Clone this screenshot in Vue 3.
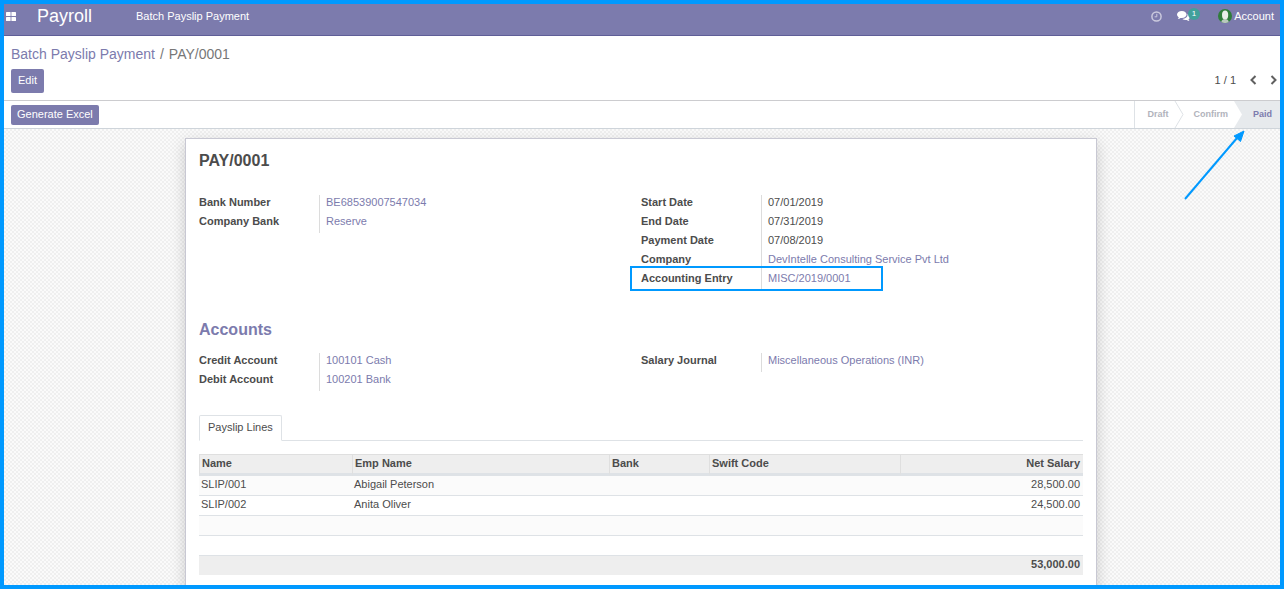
<script setup>
const infoLeft = [
  { label: 'Bank Number', value: 'BE68539007547034', link: true },
  { label: 'Company Bank', value: 'Reserve', link: true },
]
const infoRight = [
  { label: 'Start Date', value: '07/01/2019' },
  { label: 'End Date', value: '07/31/2019' },
  { label: 'Payment Date', value: '07/08/2019' },
  { label: 'Company', value: 'DevIntelle Consulting Service Pvt Ltd', link: true },
  { label: 'Accounting Entry', value: 'MISC/2019/0001', link: true, marked: true },
]
const accountsLeft = [
  { label: 'Credit Account', value: '100101 Cash', link: true },
  { label: 'Debit Account', value: '100201 Bank', link: true },
]
const accountsRight = [
  { label: 'Salary Journal', value: 'Miscellaneous Operations (INR)', link: true },
]
const sections = [
  { id: 'info', title: '', groups: [infoLeft, infoRight] },
  { id: 'accounts', title: 'Accounts', groups: [accountsLeft, accountsRight] },
]
const lines = [
  { name: 'SLIP/001', emp: 'Abigail Peterson', net: '28,500.00' },
  { name: 'SLIP/002', emp: 'Anita Oliver', net: '24,500.00' },
  { name: '', emp: '', net: '' },
  { name: '', emp: '', net: '' },
]
</script>

<template>
  <div class="app">
    <header class="navbar">
      <button class="icon-btn apps" type="button" aria-label="Applications">
        <svg width="10" height="9" viewBox="0 0 10 9" fill="currentColor">
          <rect x="0" y="0" width="4.6" height="4" rx=".6" />
          <rect x="5.4" y="0" width="4.6" height="4" rx=".6" />
          <rect x="0" y="5" width="4.6" height="4" rx=".6" />
          <rect x="5.4" y="5" width="4.6" height="4" rx=".6" />
        </svg>
      </button>
      <a class="brand" href="#">Payroll</a>
      <a class="menu" href="#">Batch Payslip Payment</a>
      <div class="systray">
        <button class="icon-btn clock" type="button" aria-label="Activities">
          <svg width="11" height="11" viewBox="0 0 11 11" fill="none" stroke="currentColor">
            <circle cx="5.5" cy="5.5" r="4.6" stroke-width="1.5" />
            <path d="M5.8 2.8v3H3.6" stroke-width="1" />
          </svg>
        </button>
        <button class="icon-btn chat" type="button" aria-label="Conversations">
          <svg width="13" height="11" viewBox="0 0 13 11" fill="currentColor">
            <path d="M4.8 0C2.1 0 0 1.6 0 3.6c0 1.1.7 2.1 1.8 2.8-.2.6-.6 1-1 1.5 1.1-.1 2-.5 2.7-1 .4.1.9.1 1.3.1 2.7 0 4.8-1.5 4.8-3.4S7.500 0 4.800 0z" />
            <path d="M10.600 3c.3 2.800-2.100 4.900-5.300 5 .9.700 2.100 1 3.400 1 .4 0 .8 0 1.100-.1.700.5 1.600.9 2.700 1-.4-.4-.8-.9-1-1.500 1-.6 1.500-1.400 1.500-2.300 0-1.300-.9-2.500-2.400-3.100z" />
          </svg>
          <span class="badge">1</span>
        </button>
        <button class="user" type="button">
          <svg width="14" height="14" viewBox="0 0 14 14">
            <circle cx="7" cy="7" r="7" fill="#2f7d3b" />
            <path d="M3.400 12.900c.2-1.700 1.400-2.300 2.500-2.700h2.400c1.100.4 2.200 1 2.400 2.700A7 7 0 0 1 3.400 12.900z" fill="#b9c9bd" />
            <ellipse cx="7.100" cy="5.900" rx="3.100" ry="4.500" fill="#e9eeea" />
          </svg>
          <span>Account</span>
        </button>
      </div>
    </header>

    <div class="control-panel">
      <nav class="breadcrumb" aria-label="Breadcrumb">
        <a href="#">Batch Payslip Payment</a>
        <span class="sep">/</span>
        <span>PAY/0001</span>
      </nav>
      <div class="actions">
        <button class="btn edit" type="button">Edit</button>
        <div class="pager">
          <span>1 / 1</span>
          <button type="button" aria-label="Previous">
            <svg width="8" height="10" viewBox="0 0 8 10" fill="none" stroke="currentColor" stroke-width="2"><path d="M6.500 1 2.500 5l4 4" /></svg>
          </button>
          <button type="button" aria-label="Next">
            <svg width="8" height="10" viewBox="0 0 8 10" fill="none" stroke="currentColor" stroke-width="2"><path d="m1.500 1 4 4-4 4" /></svg>
          </button>
        </div>
      </div>
    </div>

    <div class="statusbar">
      <button class="btn generate" type="button">Generate Excel</button>
      <div class="stages">
        <button class="stage" type="button">Draft</button>
        <svg class="chevron" width="10" height="27" viewBox="0 0 10 27">
          <path d="M1 0 9 13.500 1 27" fill="none" stroke="#dee2e6" />
        </svg>
        <button class="stage confirm" type="button">Confirm</button>
        <svg class="chevron active" width="10" height="27" viewBox="0 0 10 27">
          <path d="M0 0h1l8 13.500L1 27H0z" fill="#fff" />
        </svg>
        <button class="stage paid" type="button" aria-current="step">Paid</button>
      </div>
    </div>

    <main class="content">
      <svg class="pointer" width="64" height="74" viewBox="0 0 64 74">
        <path d="M2 70 54 9" fill="none" stroke="#0099ff" stroke-width="2" />
        <path d="M61 2 51 7l6.500 5.500z" fill="#0099ff" stroke="#0099ff" />
      </svg>
      <article class="sheet">
        <h1>PAY/0001</h1>
        <section v-for="s in sections" :key="s.id" class="section">
          <h2 v-if="s.title">{{ s.title }}</h2>
          <div class="columns">
            <dl v-for="(g, i) in s.groups" :key="i">
              <div v-for="f in g" :key="f.label" class="field" :class="{ marked: f.marked }">
                <dt>{{ f.label }}</dt>
                <dd>
                  <a v-if="f.link" href="#">{{ f.value }}</a>
                  <template v-else>{{ f.value }}</template>
                </dd>
              </div>
            </dl>
          </div>
        </section>

        <div class="tabs" role="tablist">
          <button class="tab" type="button" role="tab" aria-selected="true">Payslip Lines</button>
        </div>

        <table>
          <colgroup>
            <col class="c-name" /><col class="c-emp" /><col class="c-bank" /><col class="c-swift" /><col />
          </colgroup>
          <thead>
            <tr>
              <th>Name</th>
              <th>Emp Name</th>
              <th>Bank</th>
              <th>Swift Code</th>
              <th class="num">Net Salary</th>
            </tr>
          </thead>
          <tbody>
            <tr v-for="(l, i) in lines" :key="i">
              <td>{{ l.name }}</td>
              <td>{{ l.emp }}</td>
              <td></td>
              <td></td>
              <td class="num">{{ l.net }}</td>
            </tr>
          </tbody>
          <tfoot>
            <tr>
              <td colspan="4"></td>
              <td class="num">53,000.00</td>
            </tr>
          </tfoot>
        </table>
      </article>
    </main>
  </div>
</template>

<style>
body {
  margin: 0;
}
</style>

<style scoped>
* {
  box-sizing: border-box;
}
.app {
  display: flex;
  flex-direction: column;
  height: 100vh;
  border: 4px solid #0099ff;
  overflow: hidden;
  background: #fff;
  color: #4c4c4c;
  font: 11px/19px "Liberation Sans", Arial, sans-serif;
}
button {
  margin: 0;
  padding: 0;
  border: 0;
  background: none;
  color: inherit;
  font: inherit;
  cursor: pointer;
}
a {
  color: #7c7bad;
  text-decoration: none;
}
svg {
  display: block;
  flex: none;
}
.navbar {
  display: flex;
  align-items: center;
  flex: none;
  height: 32px;
  padding: 0 6px 7px 2px;
  background: #7c7bad;
  border-bottom: 1px solid #5f5e97;
  color: #fff;
}
.icon-btn {
  display: flex;
  align-items: center;
}
.brand {
  margin-left: 21px;
  color: #fff;
  font-size: 18px;
}
.menu {
  margin-left: 44px;
  color: #fff;
}
.systray {
  display: flex;
  align-items: center;
  margin-left: auto;
}
.clock {
  color: #cbcade;
}
.chat {
  margin-left: 15px;
}
.badge {
  height: 12px;
  margin: -4px 0 0 -2px;
  padding: 0 4px;
  border-radius: 6px;
  background: #41a09b;
  font-size: 8px;
  line-height: 12px;
}
.user {
  display: flex;
  align-items: center;
  gap: 2px;
  margin-left: 18px;
}
.control-panel {
  flex: none;
  height: 65px;
  padding: 8px 2px 0 7px;
  border-bottom: 1px solid #cccccf;
}
.breadcrumb {
  display: flex;
  gap: 5px;
  font-size: 14px;
  line-height: 20px;
  color: #777;
}
.actions {
  display: flex;
  align-items: center;
  justify-content: space-between;
  margin-top: 5px;
}
.btn {
  border-radius: 2px;
  background: #7c7bad;
  color: #fff;
}
.edit {
  height: 24px;
  padding: 0 7px 2px;
}
.pager {
  display: flex;
  align-items: center;
  gap: 13px;
  padding-bottom: 2px;
}
.pager button {
  color: #5f5f5f;
}
.statusbar {
  display: flex;
  align-items: center;
  justify-content: space-between;
  flex: none;
  height: 28px;
  padding-left: 7px;
  border-bottom: 1px solid #ced4da;
}
.generate {
  height: 20px;
  padding: 0 6px;
}
.stages {
  display: flex;
  height: 27px;
  border-left: 1px solid #dee2e6;
}
.stage {
  padding: 0 6px 0 12px;
  color: #b1b3bc;
  font-size: 9px;
  font-weight: bold;
}
.confirm {
  padding: 0 5px 0 9px;
}
.paid {
  padding: 0 8px 0 10px;
  background: #e7eaed;
  color: #7c7bad;
}
.active {
  background: #e7eaed;
}
.content {
  position: relative;
  display: flex;
  flex: 1;
  min-height: 0;
  justify-content: center;
  align-items: flex-start;
  padding: 9px 2px 0 0;
  overflow: hidden;
  background: repeating-conic-gradient(#efefef 0 25%, #fafafa 0 50%) 0 0 / 4px 4px;
}
.pointer {
  position: absolute;
  top: 0;
  right: 33px;
}
.sheet {
  width: 100%;
  max-width: 912px;
  min-height: 100%;
  padding: 12px 13px 24px;
  border: 1px solid #c8c8d3;
  background: #fff;
  box-shadow: 0 5px 14px rgba(0, 0, 0, 0.18);
}
h1,
h2 {
  margin: 0;
  font-size: 16px;
  line-height: 20px;
}
h1 {
  margin-bottom: 24px;
}
h2 {
  margin-bottom: 13px;
  color: #7c7bad;
}
.columns {
  display: grid;
  grid-template-columns: 1fr 1fr;
  align-items: start;
}
.section {
  margin-bottom: 24px;
}
.section:first-of-type {
  margin-bottom: 30px;
}
dl {
  margin: 0;
}
.field {
  position: relative;
  display: grid;
  grid-template-columns: 120px 1fr;
  height: 19px;
  line-height: 15px;
}
dt {
  font-weight: bold;
}
dd {
  margin: 0;
  padding-left: 6px;
  border-left: 1px solid #dcdcdc;
}
.marked::after {
  content: "";
  position: absolute;
  top: -5px;
  left: -11px;
  box-sizing: border-box;
  width: 253px;
  height: 25px;
  border: 2px solid #0099ff;
}
.tabs {
  display: flex;
  border-bottom: 1px solid #dee2e6;
}
.tab {
  height: 26px;
  margin-bottom: -1px;
  padding: 0 8px 2px;
  border: 1px solid #dee2e6;
  border-bottom-color: #fff;
  border-radius: 2px 2px 0 0;
  background: #fff;
}
table {
  width: 100%;
  margin-top: 13px;
  border-collapse: separate;
  border-spacing: 0;
  table-layout: fixed;
}
.c-name {
  width: 153px;
}
.c-emp {
  width: 257px;
}
.c-bank {
  width: 100px;
}
.c-swift {
  width: 191px;
}
th {
  height: 22px;
  padding: 0 3px 1px 2px;
  border: 1px solid #dfdfdf;
  border-width: 1px 0 3px 1px;
  border-bottom-color: #dee2e6;
  background: #eee;
  text-align: left;
  line-height: 17px;
}
td {
  height: 20px;
  padding: 0 3px 2px 2px;
  border-bottom: 1px solid #dee2e6;
  line-height: 17px;
}
tbody tr:nth-child(odd) {
  background: #fbfbfb;
}
tfoot td {
  height: 19px;
  border: 0;
  background: #eee;
  font-weight: bold;
}
.num {
  text-align: right;
}
</style>
